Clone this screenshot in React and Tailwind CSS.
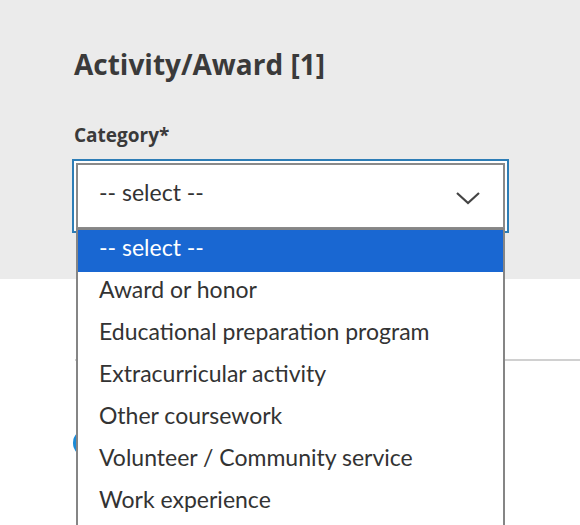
import React from "react";

const OPTIONS = [
  "-- select --",
  "Award or honor",
  "Educational preparation program",
  "Extracurricular activity",
  "Other coursework",
  "Volunteer / Community service",
  "Work experience",
];

function Chevron() {
  return (
    <svg width="26" height="14" viewBox="0 0 26 14" className="mt-[4px] shrink-0">
      <polyline
        points="2,2 13,12 24,2"
        fill="none"
        stroke="#444444"
        strokeWidth="2.2"
      />
    </svg>
  );
}

export default function App() {
  return (
    <div className="relative w-[580px] h-[525px] overflow-hidden bg-white font-['Lato',sans-serif] text-[#333333]">
      <section className="bg-[#ebebeb] h-[279px] pl-[74px] pt-[50px]">
        <h1 className="font-['Open_Sans',sans-serif] text-[28px] font-bold leading-none text-[#3a3a3a]">
          Activity/Award [1]
        </h1>
        <label className="block mt-[48px] font-['Open_Sans',sans-serif] text-[19px] font-bold leading-none text-[#3a3a3a]">
          Category*
        </label>

        <div className="relative ml-[2px] mt-[18px] w-[429px]">
          <div className="flex h-[66px] items-center justify-between border-2 border-[#8a8a8a] bg-white pl-[21px] pr-[22px] ring-2 ring-[#2d7db6] ring-offset-2 ring-offset-white">
            <span className="text-[23px] leading-[35px] pb-[7px]">-- select --</span>
            <Chevron />
          </div>

          <ul className="absolute left-0 top-[65px] z-10 w-[429px] border-2 border-[#858585] bg-white pb-[12px]">
            {OPTIONS.map((opt, i) => (
              <li
                key={opt}
                className={
                  i === 0
                    ? "h-[42px] pl-[21px] text-[23px] leading-[35px] bg-[#1967d2] text-white"
                    : "h-[42px] pl-[21px] text-[23px] leading-[35px] text-[#333333]"
                }
              >
                {opt}
              </li>
            ))}
          </ul>
        </div>
      </section>

      <div className="pl-[75px]">
        <div className="mt-[80px] border-t-2 border-[#d0d0d0]" />
        <div className="mt-[68px] -ml-[2px] h-[28px] w-[28px] rounded-full bg-[#1a8ad6]" />
      </div>
    </div>
  );
}
